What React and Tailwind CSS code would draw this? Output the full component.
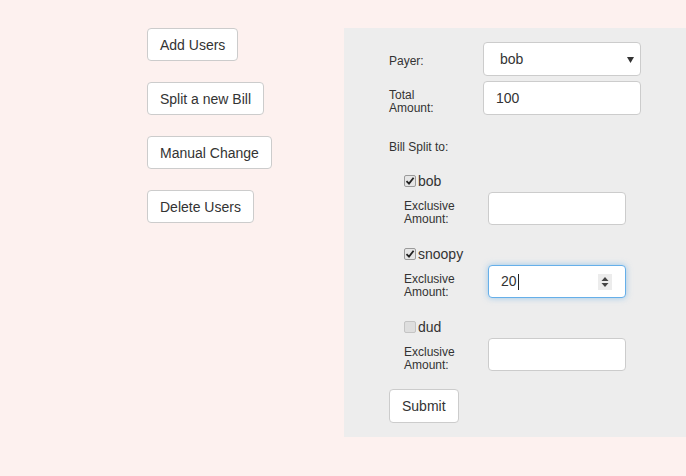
import React from "react";

function Check({ checked }) {
  return (
    <span className={`inline-flex items-center justify-center w-[12px] h-[12px] rounded-[2px] border ${checked ? "border-[#9a9a9a] bg-[#e6e6e6]" : "border-[#c4c4c4] bg-[#dedede]"}`}>
      {checked && (
        <svg width="10" height="10" viewBox="0 0 10 10">
          <path d="M1.5 5.2 L4 7.6 L8.6 1.8" fill="none" stroke="#222" strokeWidth="1.8" />
        </svg>
      )}
    </span>
  );
}

function UserBlock({ name, checked, value, focused }) {
  return (
    <div className="flex flex-col pl-[15px]">
      <div className="flex items-center h-[20px]">
        <Check checked={checked} />
        <span className="ml-[2px] text-[14px] text-[#333]">{name}</span>
      </div>
      <div className="flex items-start mt-[1px] h-[33px]">
        <div className="w-[84px] h-[33px] pt-[8px] text-[12px] leading-[13px] text-[#333]">
          Exclusive
          <br />
          Amount:
        </div>
        <div
          className={`relative w-[138px] h-[33px] rounded-[4px] bg-white flex items-center px-[12px] text-[14px] text-[#333] ${focused ? "border border-[#66afe9] shadow-[0_0_6px_rgba(102,175,233,0.6)]" : "border border-[#ccc]"}`}
        >
          {value && (
            <>
              <span>{value}</span>
              <span className="inline-block w-[1px] h-[16px] bg-[#222] ml-[1px]"></span>
            </>
          )}
          {focused && (
            <span className="absolute right-[13px] top-[8px] w-[14px] h-[16px] bg-[#ececec] flex items-center justify-center">
              <svg width="8" height="12" viewBox="0 0 8 12">
                <path d="M4 1 L7.5 5 L0.5 5 Z" fill="#444" />
                <path d="M4 11 L7.5 7 L0.5 7 Z" fill="#444" />
              </svg>
            </span>
          )}
        </div>
      </div>
    </div>
  );
}

const btn =
  "self-start h-[33px] px-[12px] rounded-[4px] border border-[#ccc] bg-white text-[14px] text-[#333] leading-none";

export default function App() {
  return (
    <div
      className="w-[686px] h-[476px] bg-[#fdf1ef] flex pt-[28px] overflow-hidden"
      style={{ fontFamily: '"Liberation Sans", Arial, sans-serif' }}
    >
      <div className="ml-[147px] w-[197px] flex flex-col gap-[21px]">
        <button className={btn}>Add Users</button>
        <button className={btn}>Split a new Bill</button>
        <button className={btn}>Manual Change</button>
        <button className={btn}>Delete Users</button>
      </div>
      <div className="w-[342px] h-[409px] bg-[#ededed] pl-[45px] pt-[14px] flex flex-col">
        <div className="flex items-start">
          <div className="w-[94px] pt-[13px] text-[12px] leading-[13px] text-[#333]">Payer:</div>
          <div className="relative w-[158px] h-[34px] rounded-[4px] border border-[#ccc] bg-white flex items-center pl-[16px] text-[14px] text-[#333]">
            bob
            <svg className="absolute right-[6px] top-[14px]" width="7" height="6" viewBox="0 0 7 6">
              <path d="M0 0 L7 0 L3.5 6 Z" fill="#333" />
            </svg>
          </div>
        </div>
        <div className="flex items-start mt-[5px]">
          <div className="w-[94px] pt-[8px] text-[12px] leading-[13px] text-[#333]">
            Total
            <br />
            Amount:
          </div>
          <div className="w-[158px] h-[34px] rounded-[4px] border border-[#ccc] bg-white flex items-center pl-[12px] text-[14px] text-[#333]">
            100
          </div>
        </div>
        <div className="mt-[25px] text-[12px] leading-[14px] text-[#333]">Bill Split to:</div>
        <div className="mt-[17px] flex flex-col gap-[19px]">
          <UserBlock name="bob" checked />
          <UserBlock name="snoopy" checked value="20" focused />
          <UserBlock name="dud" />
        </div>
        <button className="mt-[18px] self-start h-[34px] px-[12px] rounded-[4px] border border-[#ccc] bg-white text-[14px] text-[#333] leading-none">
          Submit
        </button>
      </div>
    </div>
  );
}
